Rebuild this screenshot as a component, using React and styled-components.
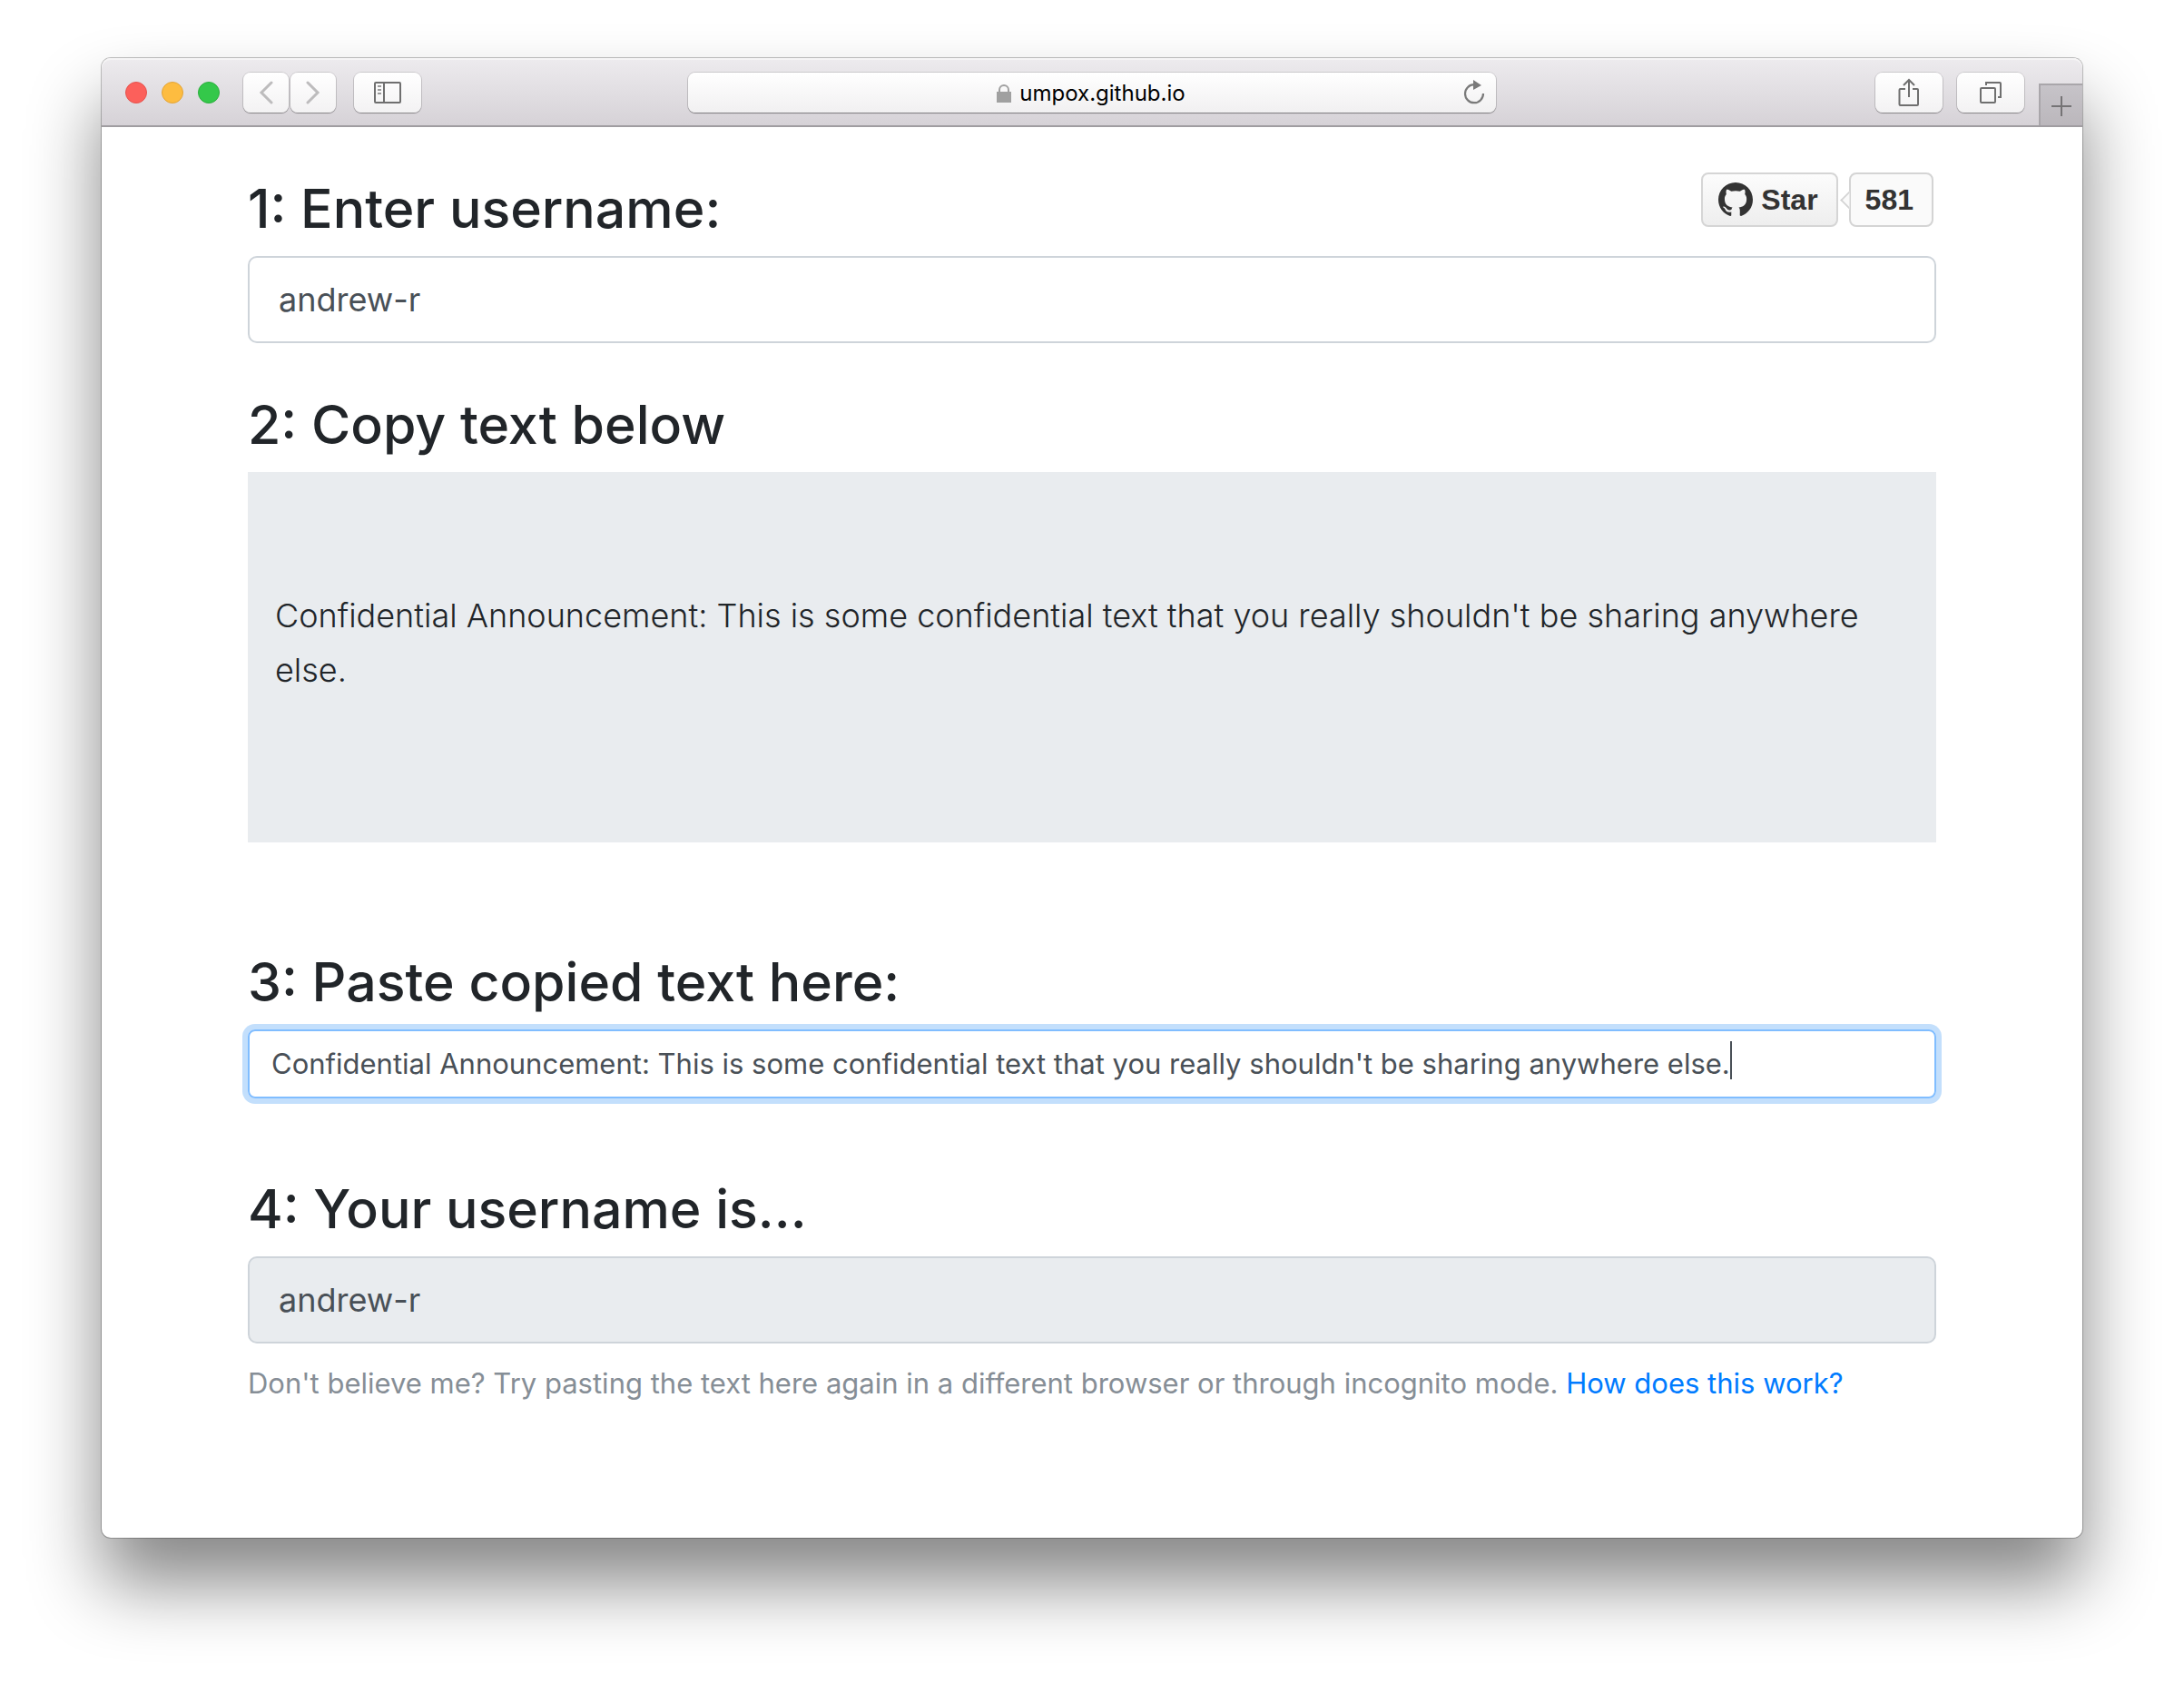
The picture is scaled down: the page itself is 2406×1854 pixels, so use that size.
import React, { useId, useState } from "react";
import styled, { createGlobalStyle } from "styled-components";

const ui = `Inter, "Open Sans", "Liberation Sans", sans-serif`;

const GlobalStyle = createGlobalStyle`
  *, *::before, *::after { box-sizing: border-box; }
  body {
    margin: 0;
    background: #fff;
    color: #212529;
    font-family: ${ui};
  }
  button, input { font-family: inherit; margin: 0; }
`;

const Desktop = styled.div`
  min-height: 100vh;
  padding: 64px 112px 160px;
`;

const Window = styled.div`
  border-radius: 10px;
  background: #fff;
  box-shadow: 0 0 0 1px rgba(0, 0, 0, 0.24), 0 50px 80px rgba(0, 0, 0, 0.48);
`;

const Toolbar = styled.header`
  display: grid;
  grid-template-columns: 1fr minmax(0, 890px) 1fr;
  align-items: start;
  height: 76px;
  padding-top: 16px;
  border-bottom: 2px solid #a09da1;
  border-radius: 10px 10px 0 0;
  background: linear-gradient(#edebee, #d6d2d7);
  box-shadow: inset 0 2px 0 #f5f4f5;
`;

const Lights = styled.div`
  display: flex;
  gap: 16px;
  padding: 10px 6px 0 0;
`;

const Light = styled.button`
  width: 24px;
  height: 24px;
  padding: 0;
  border: 1px solid ${(p) => p.$edge};
  border-radius: 50%;
  background: ${(p) => p.$fill};
`;

const ToolButton = styled.button`
  display: flex;
  align-items: center;
  justify-content: center;
  width: ${(p) => (p.$narrow ? 50 : 74)}px;
  height: 44px;
  padding: 0;
  border: 0;
  border-radius: 8px;
  background: linear-gradient(#fff, #f3f2f3);
  box-shadow: 0 0 0 1px rgba(0, 0, 0, 0.12), 0 1px 1px rgba(0, 0, 0, 0.3);
  color: ${(p) => (p.$dim ? "#bdbcbd" : "#6f6f6f")};
`;

const ButtonPair = styled.div`
  display: flex;
  gap: 2px;
`;

const LeftTools = styled.div`
  display: flex;
  gap: 20px;
  padding-left: 26px;
`;

const RightTools = styled.div`
  display: flex;
  justify-content: flex-end;
  align-items: flex-start;
  gap: 16px;
`;

const AddressBar = styled.div`
  display: flex;
  align-items: center;
  justify-content: center;
  height: 44px;
  padding: 0 10px 0 36px;
  border-radius: 8px;
  background: linear-gradient(#fff, #f1f0f1);
  box-shadow: 0 0 0 1px rgba(0, 0, 0, 0.12), 0 1px 1px rgba(0, 0, 0, 0.35);
`;

const Address = styled.div`
  flex: 1;
  display: flex;
  align-items: center;
  justify-content: center;
  gap: 9px;
  padding-top: 2px;
  color: #000;
  font-size: 24px;
  line-height: 32px;
`;

const Reload = styled.button`
  display: flex;
  padding: 0;
  border: 0;
  background: none;
`;

const NewTab = styled.button`
  display: flex;
  align-items: center;
  justify-content: center;
  width: 48px;
  height: 46px;
  margin-top: 12px;
  padding: 2px 0 0;
  border: solid #a9a6aa;
  border-width: 2px 0 0 2px;
  background: linear-gradient(#c6c3c8, #bbb7bc);
`;

const Page = styled.main`
  padding: 56px 161px 146px;
`;

const Section = styled.section`
  margin-bottom: ${(p) => p.$after || 0}px;
`;

const HeadingRow = styled.div`
  display: flex;
  justify-content: space-between;
  align-items: flex-start;
`;

const Heading = styled.h2`
  margin: 0 0 18px;
  font-size: 59px;
  font-weight: 500;
  line-height: 68px;
`;

const Field = styled.input`
  display: block;
  width: 100%;
  height: 96px;
  padding: 0 32px;
  border: 2px solid #ced4da;
  border-radius: 10px;
  outline: 0;
  background: ${(p) => (p.readOnly ? "#e9ecef" : "#fff")};
  color: #495057;
  font-size: 36px;
`;

const FocusField = styled.div`
  display: flex;
  align-items: center;
  height: 76px;
  padding: 0 24px;
  border: 2px solid #80bdff;
  border-radius: 8px;
  box-shadow: 0 0 0 6px #c3dffc;
`;

const PasteInput = styled.input`
  field-sizing: content;
  max-width: 100%;
  padding: 0;
  border: 0;
  outline: 0;
  background: none;
  color: #495057;
  caret-color: transparent;
  font-size: 31px;
  line-height: 42px;
`;

const Caret = styled.span`
  width: 2px;
  height: 42px;
  margin-top: -8px;
  background: #495057;
`;

const CopyBox = styled.div`
  padding: 128px 30px 160px;
  background: #e9ecef;
`;

const Lead = styled.p`
  margin: 0;
  font-size: 36px;
  font-weight: 300;
  line-height: 60px;
`;

const Help = styled.p`
  margin: 20px 0 0;
  color: #868e96;
  font-size: 31px;
  line-height: 48px;
`;

const Link = styled.a`
  color: #007bff;
  text-decoration: none;
`;

const StarWidget = styled.div`
  display: flex;
  margin: -6px 3px 0 0;
  gap: 12px;
  font-family: "Liberation Sans", Arial, sans-serif;
  font-size: 32px;
  font-weight: 700;
`;

const StarButton = styled.button`
  display: flex;
  align-items: center;
  gap: 9px;
  height: 60px;
  padding: 0 20px 0 17px;
  border: 2px solid #d5d5d5;
  border-radius: 8px;
  background: linear-gradient(#fcfcfc, #eee);
  color: #333;
  font: inherit;
`;

const StarCount = styled.a`
  position: relative;
  display: flex;
  align-items: center;
  height: 60px;
  padding: 0 20px 0 16px;
  border: 2px solid #d4d4d4;
  border-radius: 8px;
  background: #fafafa;
  color: #333;
  text-decoration: none;

  &::before {
    content: "";
    position: absolute;
    top: 21px;
    left: -9px;
    width: 15px;
    height: 15px;
    border: solid #d4d4d4;
    border-width: 0 0 2px 2px;
    background: #fafafa;
    transform: rotate(45deg);
    clip-path: polygon(0 0, 100% 100%, 0 100%);
  }
`;

const Chevron = ({ d }) => (
  <svg width="16" height="26" viewBox="0 0 16 26" fill="none" stroke="currentColor" strokeWidth="3" strokeLinecap="round" aria-hidden="true">
    <path d={d} />
  </svg>
);

const SidebarIcon = () => (
  <svg width="30" height="24" viewBox="0 0 30 24" fill="none" stroke="currentColor" strokeWidth="2" aria-hidden="true">
    <rect x="1" y="1" width="28" height="22" rx="1" />
    <path d="M11 1v22" />
    <path d="M4 5h4M4 9h4M4 13h4" stroke="#999" />
  </svg>
);

const LockIcon = () => (
  <svg width="16" height="20" viewBox="0 0 16 20" aria-hidden="true">
    <path d="M3 9V6a5 5 0 0 1 10 0v3" fill="none" stroke="#a0a0a0" strokeWidth="2" />
    <rect y="8" width="16" height="12" fill="#a0a0a0" />
  </svg>
);

const ReloadIcon = () => (
  <svg width="28" height="28" viewBox="0 0 28 28" aria-hidden="true">
    <path d="M14 5.2A10 10 0 1 0 24 15" fill="none" stroke="#7a7a7a" strokeWidth="2.2" />
    <path d="M13 0l9 6-9 5z" fill="#7a7a7a" />
  </svg>
);

const ShareIcon = () => (
  <svg width="24" height="32" viewBox="0 0 24 32" fill="none" stroke="currentColor" strokeWidth="2" aria-hidden="true">
    <path d="M8 12H2.5Q1.5 12 1.5 13V29Q1.5 30 2.5 30H21Q22 30 22 29V13Q22 12 21 12H16" />
    <path d="M12 21V2M6 8l6-6 6 6" />
  </svg>
);

const TabsIcon = () => (
  <svg width="24" height="24" viewBox="0 0 24 24" fill="none" stroke="currentColor" strokeWidth="2" aria-hidden="true">
    <rect x="1" y="7" width="16" height="16" rx="1" />
    <path d="M7 4V1h15q1 0 1 1v15h-3" />
  </svg>
);

const PlusIcon = () => (
  <svg width="22" height="22" viewBox="0 0 22 22" stroke="#757375" strokeWidth="2" aria-hidden="true">
    <path d="M11 0v22M0 11h22" />
  </svg>
);

const GitHubMark = () => (
  <svg width="38" height="38" viewBox="0 0 16 16" fill="#333" aria-hidden="true">
    <path d="M8 0C3.58 0 0 3.58 0 8c0 3.54 2.29 6.53 5.47 7.59.4.07.55-.17.55-.38 0-.19-.01-.82-.01-1.49-2.01.37-2.53-.49-2.69-.94-.09-.23-.48-.94-.82-1.13-.28-.15-.68-.52-.01-.53.63-.01 1.08.58 1.23.82.72 1.21 1.87.87 2.33.66.07-.52.28-.87.51-1.07-1.78-.2-3.64-.89-3.64-3.95 0-.87.31-1.59.82-2.15-.08-.2-.36-1.02.08-2.12 0 0 .67-.21 2.2.82.64-.18 1.32-.27 2-.27s1.36.09 2 .27c1.53-1.04 2.2-.82 2.2-.82.44 1.1.16 1.92.08 2.12.51.56.82 1.27.82 2.15 0 3.07-1.87 3.75-3.65 3.95.29.25.54.73.54 1.48 0 1.07-.01 1.93-.01 2.2 0 .21.15.46.55.38A8.01 8.01 0 0 0 16 8c0-4.42-3.58-8-8-8z" />
  </svg>
);

const SECRET = "Confidential Announcement: This is some confidential text that you really shouldn't be sharing anywhere else.";

function BrowserToolbar() {
  return (
    <Toolbar>
      <LeftTools>
        <Lights>
          <Light aria-label="Close" $fill="#fc605b" $edge="#e5534e" />
          <Light aria-label="Minimise" $fill="#fdbc40" $edge="#e3a437" />
          <Light aria-label="Zoom" $fill="#34c84a" $edge="#2bae3c" />
        </Lights>
        <ButtonPair>
          <ToolButton $narrow $dim aria-label="Back"><Chevron d="M14 2L3 13l11 11" /></ToolButton>
          <ToolButton $narrow $dim aria-label="Forward"><Chevron d="M2 2l11 11L2 24" /></ToolButton>
        </ButtonPair>
        <ToolButton aria-label="Show sidebar"><SidebarIcon /></ToolButton>
      </LeftTools>
      <AddressBar>
        <Address><LockIcon />umpox.github.io</Address>
        <Reload aria-label="Reload"><ReloadIcon /></Reload>
      </AddressBar>
      <RightTools>
        <ToolButton aria-label="Share"><ShareIcon /></ToolButton>
        <ToolButton aria-label="Show all tabs"><TabsIcon /></ToolButton>
        <NewTab aria-label="New tab"><PlusIcon /></NewTab>
      </RightTools>
    </Toolbar>
  );
}

export default function App() {
  const id = useId();
  const [username, setUsername] = useState("andrew-r");
  const [pasted, setPasted] = useState(SECRET);

  return (
    <>
      <GlobalStyle />
      <Desktop>
        <Window>
          <BrowserToolbar />
          <Page>
            <Section $after={56}>
              <HeadingRow>
                <Heading><label htmlFor={`${id}-user`}>1: Enter username:</label></Heading>
                <StarWidget>
                  <StarButton><GitHubMark />Star</StarButton>
                  <StarCount href="#stargazers">581</StarCount>
                </StarWidget>
              </HeadingRow>
              <Field id={`${id}-user`} value={username} onChange={(e) => setUsername(e.target.value)} />
            </Section>
            <Section $after={120}>
              <Heading>2: Copy text below</Heading>
              <CopyBox><Lead>{SECRET}</Lead></CopyBox>
            </Section>
            <Section $after={88}>
              <Heading><label htmlFor={`${id}-paste`}>3: Paste copied text here:</label></Heading>
              <FocusField>
                <PasteInput id={`${id}-paste`} value={pasted} onChange={(e) => setPasted(e.target.value)} />
                <Caret />
              </FocusField>
            </Section>
            <Section>
              <Heading><label htmlFor={`${id}-result`}>4: Your username is...</label></Heading>
              <Field id={`${id}-result`} value={username} readOnly />
              <Help>
                Don't believe me? Try pasting the text here again in a different browser or through incognito mode.{" "}
                <Link href="#how">How does this work?</Link>
              </Help>
            </Section>
          </Page>
        </Window>
      </Desktop>
    </>
  );
}
